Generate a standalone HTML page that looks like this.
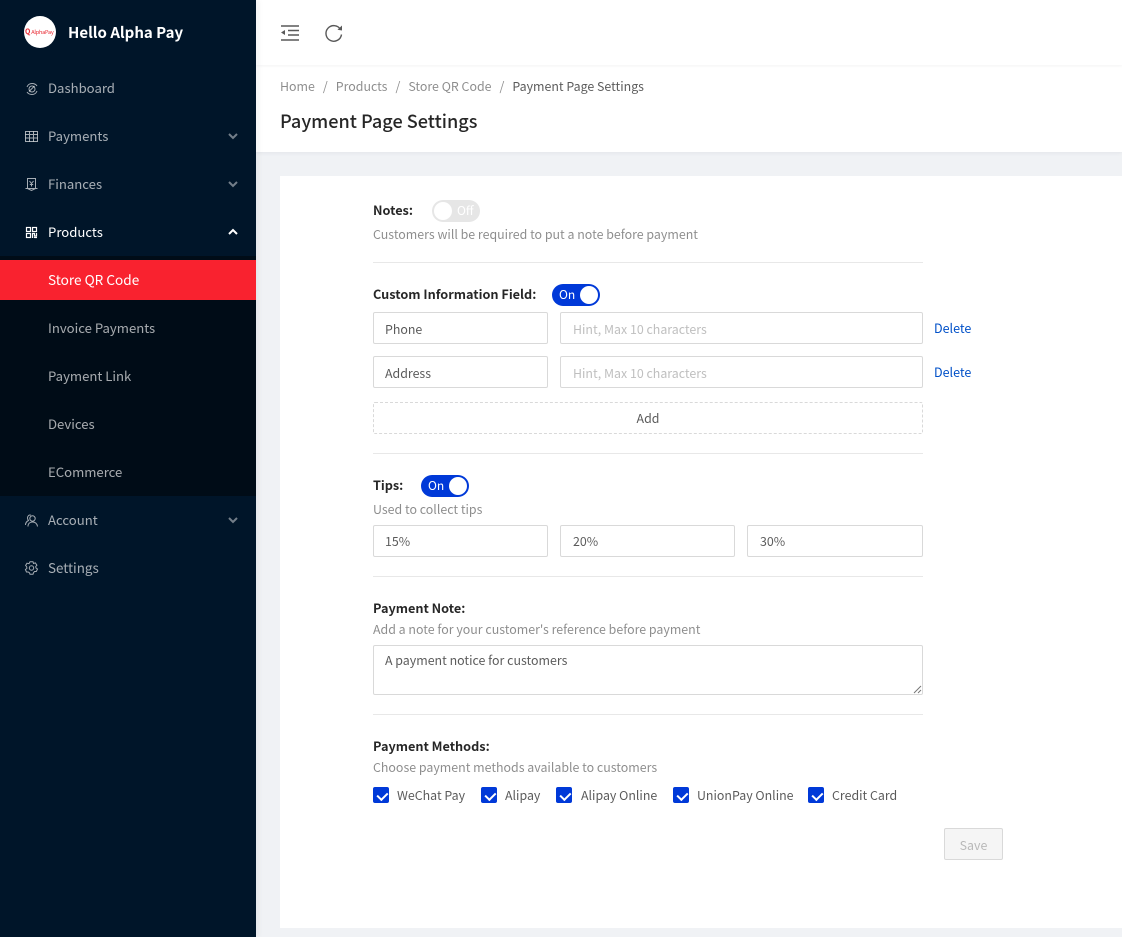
<!DOCTYPE html>
<html><head><meta charset="utf-8"><title>Payment Page Settings</title>
<style>
*{box-sizing:border-box}
html,body{margin:0;padding:0;width:1122px;height:937px;overflow:hidden;background:#f0f2f5;font-family:"Noto Sans CJK SC","Liberation Sans",sans-serif;font-size:12.400px;color:rgba(0,0,0,.65)}
.a{position:absolute;white-space:nowrap;line-height:20px}
#side{position:absolute;left:0;top:0;width:256px;height:937px;background:#001529;z-index:5;box-shadow:2px 0 6px rgba(0,21,41,.06)}
#sub{position:absolute;left:0;top:256px;width:256px;height:240px;background:#000c17}
#act{position:absolute;left:0;top:260px;width:256px;height:40px;background:#f9222f}
.m{color:rgba(255,255,255,.65);left:48px;font-size:13.150px}
.w{color:#fff;font-size:13.150px}
svg{position:absolute;overflow:visible}
.ic{fill:none;stroke:rgba(255,255,255,.65);stroke-width:1}
.ch{fill:none;stroke:rgba(255,255,255,.45);stroke-width:2}
.b{font-weight:700;color:rgba(0,0,0,.85);font-size:12.700px}
.h{color:rgba(0,0,0,.45)}
.i{position:absolute;background:#fff;border:1px solid #d9d9d9;border-radius:2px;height:32px;line-height:31px;padding-left:11px;white-space:nowrap}
.r{line-height:32px}
.n{padding-left:12px}
.hr{position:absolute;left:373px;width:550px;height:1px;background:#e8e8e8}
.p{color:#bfbfbf}
.t{position:absolute;width:48px;height:22px;border-radius:11px;background:#0039d8;color:#fff;font-size:12px;line-height:22px}
.t i{position:absolute;top:2px;left:28px;width:18px;height:18px;border-radius:50%;background:#fff}
.t span{position:absolute;left:7px;top:0}
.c{position:absolute;top:787px;width:16px;height:16px;background:#0039d8;border-radius:2px}
.c:after{content:"";position:absolute;left:5.500px;top:3px;width:4.500px;height:8px;border:solid #fff;border-width:0 2px 2px 0;transform:rotate(45deg)}
.del{color:#0050c8;font-size:12.500px}
.s{margin:0 8px}
</style></head><body>
<div id="side">
<div id="sub"></div><div id="act"></div>
<div style="position:absolute;left:24px;top:16px;width:32px;height:32px;border-radius:50%;background:#fff"></div>
<div class="a" style="left:25px;top:28px;font-size:5.500px;line-height:8px;color:#e8262f;letter-spacing:-.2px"><b style="font-size:7px">Q</b> AlphaPay</div>
<div class="a" style="left:68px;top:21px;font-size:15px;font-weight:700;line-height:23px;color:#fff">Hello Alpha Pay</div>

<svg style="left:25px;top:82px" width="14" height="14" viewBox="0 0 14 14"><g class="ic"><circle cx="7" cy="7" r="3"/><path d="M2 5C3 2.500 5 1.500 7 1.500 9 1.500 11 2.500 12 4M12 9C11 11.500 9 12.500 7 12.500 5 12.500 3 11.500 2 10M4 9.500L9.500 4"/></g></svg>
<div class="a m" style="top:78px">Dashboard</div>

<svg style="left:25px;top:131px" width="13" height="11" viewBox="0 0 13 11"><g class="ic"><rect x=".5" y=".5" width="12" height="10"/><path d="M4.500 .5V10.500M8.500 .5V10.500M.5 3.500H12.500M.5 7H12.500"/></g></svg>
<div class="a m" style="top:126px">Payments</div>
<svg style="left:228px;top:133px" width="10" height="6"><path class="ch" d="M1 1L5 5 9 1"/></svg>

<svg style="left:25px;top:178px" width="13" height="13" viewBox="0 0 13 13"><g class="ic"><path d="M2.500 .5H10.500V10.500H2.500ZM.5 10.500H2.500L6.500 12.500 10.500 10.500H12.500M4.500 3L6.500 5.500 8.500 3M6.500 5.500V8.500M4.800 6.500H8.200"/></g></svg>
<div class="a m" style="top:174px">Finances</div>
<svg style="left:228px;top:181px" width="10" height="6"><path class="ch" d="M1 1L5 5 9 1"/></svg>

<svg style="left:26px;top:227px" width="11" height="11" viewBox="0 0 11 11"><g fill="none" stroke="#fff" stroke-width="1.200"><rect x=".5" y=".5" width="4" height="4"/><rect x="6.500" y=".5" width="4" height="4"/><rect x=".5" y="6.500" width="4" height="4"/><path d="M6.500 11V6.500H8.500V9H10.500V6M8.500 11V10.500H11"/></g></svg>
<div class="a w" style="left:48px;top:222px">Products</div>
<svg style="left:228px;top:229px" width="10" height="6"><path fill="none" stroke="#fff" stroke-width="2" d="M1 5L5 1 9 5"/></svg>

<div class="a w" style="left:48px;top:269px;font-size:13.600px">Store QR Code</div>
<div class="a m" style="top:318px">Invoice Payments</div>
<div class="a m" style="top:366px">Payment Link</div>
<div class="a m" style="top:414px">Devices</div>
<div class="a m" style="top:462px">ECommerce</div>

<svg style="left:25px;top:514px" width="13" height="13" viewBox="0 0 13 13"><g class="ic"><circle cx="7.500" cy="4.500" r="2.700"/><path d="M3 12.500C3 9.500 5 8 7.500 8 10 8 12 9.500 12.500 12.500M6 1.200C4 .5 2.500 2 2.500 4 2.500 5 3 6 3.500 6.500 1.500 7.500 .5 9 .5 11"/></g></svg>
<div class="a m" style="top:510px">Account</div>
<svg style="left:228px;top:517px" width="10" height="6"><path class="ch" d="M1 1L5 5 9 1"/></svg>

<svg style="left:25px;top:561px" width="13" height="14" viewBox="0 0 13 14"><g class="ic"><circle cx="6.500" cy="7" r="2.200"/><path d="M5 .8H8L8.500 2.500 10.300 1.900 11.900 4.200 10.700 5.600 11 7 12.500 8 11.300 10.500 9.500 10.500 8.500 11.800 8 13.200H5L4.500 11.800 3.200 11 1.500 11 .4 8.500 1.800 7.500V6L.6 4.500 2 2.200 4 2.700Z"/></g></svg>
<div class="a m" style="top:557px;font-size:13.400px">Settings</div>
</div>

<div style="position:absolute;left:256px;top:65px;width:866px;height:87px;background:#fff;box-shadow:0 1px 4px rgba(0,21,41,.06)"></div>
<div style="position:absolute;left:256px;top:0;width:866px;height:65px;background:#fff;box-shadow:0 1px 3px rgba(0,21,41,.05)"></div>
<svg style="left:281px;top:25px" width="18" height="16" viewBox="0 0 18 16"><path fill="none" stroke="#595959" stroke-width="1.500" d="M0 1H18M7 5.500H18M7 10H18M0 15H18"/><path fill="#595959" d="M0 7.500L4 5V10Z"/></svg>
<svg style="left:325px;top:24px" width="18" height="18" viewBox="0 0 18 18"><path fill="none" stroke="#595959" stroke-width="1.400" d="M15.500 5.500A7.800 7.800 0 1 0 16.500 10.500"/><path fill="#595959" d="M12.500 5.800L17 6.500V1.500Z"/></svg>

<div class="a" style="left:280px;top:76px;font-size:12.400px;color:rgba(0,0,0,.45)">Home<span class="s">/</span>Products<span class="s">/</span>Store QR Code<span class="s">/</span><span style="color:rgba(0,0,0,.65)">Payment Page Settings</span></div>
<div class="a" style="left:280px;top:108px;line-height:26px;font-size:18.100px;font-weight:500;color:rgba(0,0,0,.85)">Payment Page Settings</div>

<div style="position:absolute;left:280px;top:176px;width:842px;height:752px;background:#fff"></div>

<div class="a b" style="left:373px;top:200px">Notes:</div>
<div style="position:absolute;left:432px;top:200px;width:48px;height:22px;border-radius:11px;background:#e6e6e6"><i style="position:absolute;left:2px;top:2px;width:18px;height:18px;border-radius:50%;background:#fff"></i><span style="position:absolute;left:25px;top:0;color:#fff;font-size:12px;line-height:22px">Off</span></div>
<div class="a h" style="left:373px;top:224px">Customers will be required to put a note before payment</div>
<div class="hr" style="top:262px"></div>

<div class="a b" style="left:373px;top:284px">Custom Information Field:</div>
<div class="t" style="left:552px;top:284px"><span>On</span><i></i></div>
<div class="i r" style="left:373px;top:312px;width:175px">Phone</div>
<div class="i r n p" style="left:560px;top:312px;width:363px">Hint, Max 10 characters</div>
<div class="a del" style="left:934px;top:318px">Delete</div>
<div class="i r" style="left:373px;top:356px;width:175px">Address</div>
<div class="i r n p" style="left:560px;top:356px;width:363px">Hint, Max 10 characters</div>
<div class="a del" style="left:934px;top:362px">Delete</div>
<div style="position:absolute;left:373px;top:402px;width:550px;height:32px;border:1px dashed #d9d9d9;border-radius:2px;text-align:center;line-height:30px">Add</div>
<div class="hr" style="top:453px"></div>

<div class="a b" style="left:373px;top:475px">Tips:</div>
<div class="t" style="left:421px;top:475px"><span>On</span><i></i></div>
<div class="a h" style="left:373px;top:499px">Used to collect tips</div>
<div class="i" style="left:373px;top:525px;width:175px">15%</div>
<div class="i n" style="left:560px;top:525px;width:175px">20%</div>
<div class="i n" style="left:747px;top:525px;width:176px">30%</div>
<div class="hr" style="top:576px"></div>

<div class="a b" style="left:373px;top:598px">Payment Note:</div>
<div class="a h" style="left:373px;top:619px">Add a note for your customer's reference before payment</div>
<div class="i" style="left:373px;top:645px;width:550px;height:50px;line-height:28px">A payment notice for customers</div>
<svg style="left:913px;top:685px" width="9" height="9"><path stroke="#777" fill="none" d="M1 8L8 1M5 8L8 5"/></svg>
<div class="hr" style="top:714px"></div>

<div class="a b" style="left:373px;top:736px">Payment Methods:</div>
<div class="a h" style="left:373px;top:757px">Choose payment methods available to customers</div>
<div class="c" style="left:373px"></div><div class="a" style="left:397px;top:785px">WeChat Pay</div>
<div class="c" style="left:481px"></div><div class="a" style="left:505px;top:785px">Alipay</div>
<div class="c" style="left:556px"></div><div class="a" style="left:581px;top:785px">Alipay Online</div>
<div class="c" style="left:673px"></div><div class="a" style="left:697px;top:785px">UnionPay Online</div>
<div class="c" style="left:808px"></div><div class="a" style="left:832px;top:785px">Credit Card</div>
<div style="position:absolute;left:944px;top:828px;width:59px;height:32px;background:#f5f5f5;border:1px solid #d9d9d9;border-radius:2px;text-align:center;line-height:32px;color:rgba(0,0,0,.25)">Save</div>
</body></html>
